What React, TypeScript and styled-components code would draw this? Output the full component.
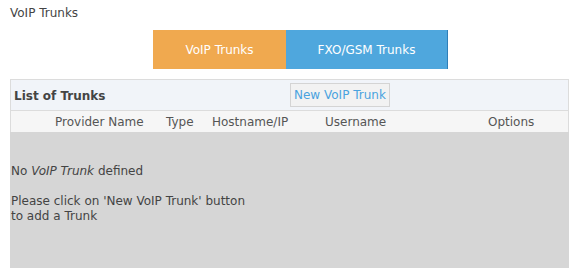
import React from "react";
import styled, { createGlobalStyle } from "styled-components";

const GlobalStyle = createGlobalStyle`
  body {
    margin: 0;
    background: #fff;
    font-family: "DejaVu Sans", Verdana, sans-serif;
    color: #444;
  }
`;

const Page = styled.div`
  padding: 6px 14px 0 10px;
`;

const Title = styled.div`
  font-size: 12px;
  line-height: 15px;
  color: #444;
`;

const Tabs = styled.div`
  display: flex;
  margin: 9px 0 10px 143px;
`;

const Tab = styled.div<{ $bg: string; $w: number; $edge?: string }>`
  width: ${(p) => p.$w}px;
  height: 39px;
  display: flex;
  align-items: center;
  justify-content: center;
  background: ${(p) => p.$bg};
  border-right: ${(p) => (p.$edge ? `1px solid ${p.$edge}` : "none")};
  color: #fff;
  font-size: 12px;
`;

const Panel = styled.div`
  width: 559px;
`;

const PanelHead = styled.div`
  display: flex;
  align-items: center;
  height: 30px;
  border: 1px solid #dcdcdc;
  background: #f1f4f9;
  padding-left: 3px;
`;

const PanelTitle = styled.div`
  font-size: 12px;
  font-weight: bold;
  color: #444;
  width: 276px;
  padding-top: 1px;
`;

const NewButton = styled.button`
  height: 24px;
  padding: 0 3px;
  border: 1px solid #d4d4d4;
  background: #f2f2f2;
  color: #4aa3df;
  font-family: inherit;
  font-size: 12px;
`;

const ColumnRow = styled.div`
  display: grid;
  grid-template-columns: 44px 111px 46px 113px 163px 1fr;
  height: 21px;
  align-items: center;
  background: #f6f6f6;
  border-left: 1px solid #dcdcdc;
  border-right: 1px solid #dcdcdc;
  font-size: 12px;
  color: #555;
`;

const Body = styled.div`
  height: 136px;
  background: #d6d6d6;
  padding: 32px 0 0 1px;
  box-sizing: border-box;
  font-size: 12px;
  line-height: 15px;
  color: #444;
`;

const Note = styled.p<{ $gap?: number }>`
  margin: 0 0 ${(p) => p.$gap ?? 0}px;
  max-width: 238px;
`;

const columns = ["", "Provider Name", "Type", "Hostname/IP", "Username", "Options"];

export default function App() {
  return (
    <>
      <GlobalStyle />
      <Page>
        <Title>VoIP Trunks</Title>
        <Tabs>
          <Tab $bg="#f0a94f" $w={133}>VoIP Trunks</Tab>
          <Tab $bg="#4fa7dd" $w={161} $edge="#2f7fb8">FXO/GSM Trunks</Tab>
        </Tabs>
        <Panel>
          <PanelHead>
            <PanelTitle>List of Trunks</PanelTitle>
            <NewButton>New VoIP Trunk</NewButton>
          </PanelHead>
          <ColumnRow>
            {columns.map((c, i) => (
              <span key={i}>{c}</span>
            ))}
          </ColumnRow>
          <Body>
            <Note $gap={15}>
              No <i>VoIP Trunk</i> defined
            </Note>
            <Note>Please click on 'New VoIP Trunk' button to add a Trunk</Note>
          </Body>
        </Panel>
      </Page>
    </>
  );
}
